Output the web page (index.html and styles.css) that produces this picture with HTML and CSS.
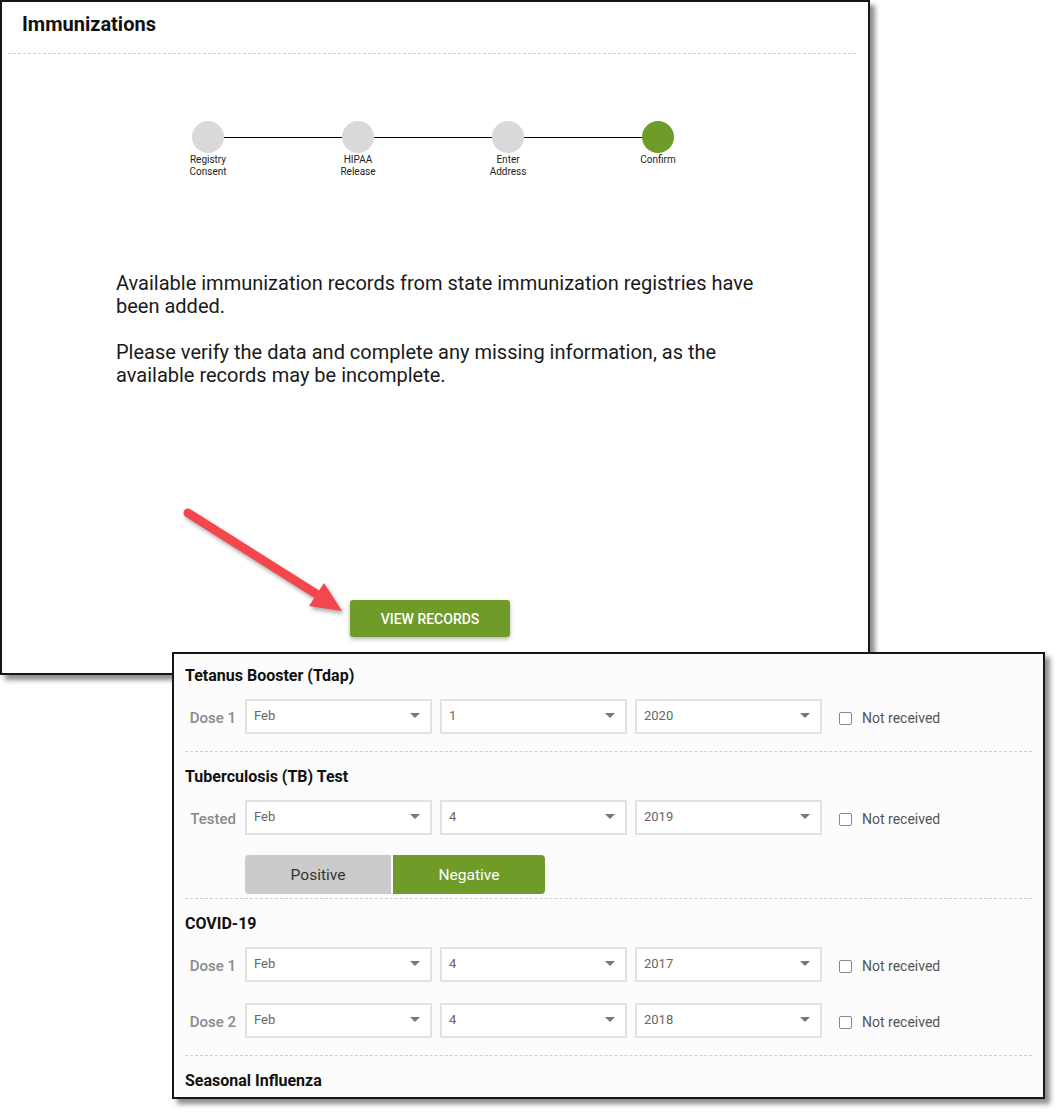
FILE: index.html
```html
<!DOCTYPE html>
<html lang="en">
<head>
  <meta charset="UTF-8">
  <title>Immunizations</title>
  <link rel="stylesheet" href="styles.css">
</head>
<body>

  <!-- first window: registry import wizard -->
  <div class="window wizard">
    <div class="wizard-header">
      <h2>Immunizations</h2>
    </div>

    <div class="steps">
      <div class="step">
        <span class="dot"></span>
        <span class="step-label">Registry<br>Consent</span>
      </div>
      <span class="connector"></span>
      <div class="step">
        <span class="dot"></span>
        <span class="step-label">HIPAA<br>Release</span>
      </div>
      <span class="connector"></span>
      <div class="step">
        <span class="dot"></span>
        <span class="step-label">Enter<br>Address</span>
      </div>
      <span class="connector"></span>
      <div class="step">
        <span class="dot active"></span>
        <span class="step-label">Confirm</span>
      </div>
    </div>

    <div class="message">
      <p>Available immunization records from state immunization registries have been added.</p>
      <p>Please verify the data and complete any missing information, as the available records may be incomplete.</p>
    </div>

    <button class="view-btn">VIEW RECORDS</button>
  </div>

  <!-- red callout arrow -->
  <svg class="arrow" width="180" height="120" viewBox="180 505 180 120">
    <line x1="188" y1="513" x2="318" y2="595" stroke="#f4474d" stroke-width="9" stroke-linecap="round"/>
    <polygon points="342,611 309,606 324,583" fill="#f4474d"/>
  </svg>

  <!-- second window: records -->
  <div class="window records">

    <div class="section">
      <h3>Tetanus Booster (Tdap)</h3>
      <div class="row">
        <span class="row-label">Dose 1</span>
        <div class="select"><span>Feb</span><i class="caret"></i></div>
        <div class="select"><span>1</span><i class="caret"></i></div>
        <div class="select"><span>2020</span><i class="caret"></i></div>
        <label class="check"><span class="box"></span>Not received</label>
      </div>
    </div>

    <div class="section tight">
      <h3>Tuberculosis (TB) Test</h3>
      <div class="row">
        <span class="row-label">Tested</span>
        <div class="select"><span>Feb</span><i class="caret"></i></div>
        <div class="select"><span>4</span><i class="caret"></i></div>
        <div class="select"><span>2019</span><i class="caret"></i></div>
        <label class="check"><span class="box"></span>Not received</label>
      </div>
      <div class="toggle">
        <button class="toggle-btn">Positive</button>
        <button class="toggle-btn on">Negative</button>
      </div>
    </div>

    <div class="section">
      <h3>COVID-19</h3>
      <div class="row">
        <span class="row-label">Dose 1</span>
        <div class="select"><span>Feb</span><i class="caret"></i></div>
        <div class="select"><span>4</span><i class="caret"></i></div>
        <div class="select"><span>2017</span><i class="caret"></i></div>
        <label class="check"><span class="box"></span>Not received</label>
      </div>
      <div class="row second">
        <span class="row-label">Dose 2</span>
        <div class="select"><span>Feb</span><i class="caret"></i></div>
        <div class="select"><span>4</span><i class="caret"></i></div>
        <div class="select"><span>2018</span><i class="caret"></i></div>
        <label class="check"><span class="box"></span>Not received</label>
      </div>
    </div>

    <div class="section last">
      <h3>Seasonal Influenza</h3>
    </div>

  </div>

</body>
</html>
```

FILE: styles.css
```css
* {
  box-sizing: border-box;
}

body {
  margin: 0;
  width: 1060px;
  height: 1114px;
  position: relative;
  background: #fff;
  font-family: Roboto, 'Liberation Sans', sans-serif;
  color: #1a1a1a;
}

.window {
  position: absolute;
  border: 2px solid #161616;
  box-shadow: 5px 5px 5px rgba(0,0,0,0.45);
}

/* ---------- wizard window ---------- */

.wizard {
  left: 0;
  top: 0;
  width: 870px;
  height: 675px;
  background: #fff;
}

.wizard-header {
  margin: 0 12px 0 6px;
  height: 52px;
  padding: 10px 0 0 14px;
  border-bottom: 1px dashed #d2d2d2;
}

.wizard-header h2 {
  margin: 0;
  font-size: 20px;
  line-height: 24px;
  font-weight: 700;
  color: #111;
}

.steps {
  display: flex;
  margin: 67px 0 0 190px;
}

.step {
  width: 32px;
  display: flex;
  flex-direction: column;
  align-items: center;
}

.dot {
  width: 32px;
  height: 32px;
  border-radius: 50%;
  background: #d9d9d9;
}

.dot.active {
  background: #6f9b29;
}

.step-label {
  font-size: 10px;
  line-height: 12px;
  color: #222;
  text-align: center;
  white-space: nowrap;
  margin-top: 1px;
}

.connector {
  flex: 0 0 118px;
  height: 1px;
  margin-top: 16px;
  background: #000;
}

.message {
  width: 660px;
  margin: 94px 0 0 114px;
  font-size: 20px;
  line-height: 23px;
  color: #1a1a1a;
}

.message p {
  margin: 0 0 23px;
}

.view-btn {
  display: block;
  margin: 213px 0 0 348px;
  width: 160px;
  height: 37px;
  border: none;
  border-radius: 3px;
  background: #6f9b29;
  color: #fff;
  font-family: Roboto, 'Liberation Sans', sans-serif;
  font-size: 14px;
  font-weight: 500;
  box-shadow: 0 2px 4px rgba(0,0,0,0.3);
  cursor: pointer;
}

.arrow {
  position: absolute;
  left: 180px;
  top: 505px;
  filter: drop-shadow(2px 3px 2px rgba(0,0,0,0.35));
}

/* ---------- records window ---------- */

.records {
  left: 172px;
  top: 652px;
  width: 873px;
  height: 447px;
  background: #fcfcfc;
  padding: 0 11px;
  overflow: hidden;
}

.section {
  padding: 15px 0 17px;
  border-bottom: 1px dashed #cfcfcf;
}

.section:first-child {
  padding-top: 12px;
}

.section.tight {
  padding-bottom: 4px;
}

.section.last {
  border-bottom: none;
}

.section h3 {
  margin: 0;
  font-size: 16px;
  line-height: 20px;
  font-weight: 700;
  color: #111;
}

.row {
  display: flex;
  align-items: center;
  margin-top: 13px;
}

.row.second {
  margin-top: 21px;
}

.row-label {
  width: 60px;
  padding-right: 9px;
  padding-top: 3px;
  text-align: right;
  font-size: 15px;
  font-weight: 500;
  color: #8a8a8a;
}

.select {
  width: 187px;
  height: 35px;
  margin-right: 8px;
  border: 2px solid #e2e2e2;
  background: #fff;
  display: flex;
  align-items: center;
  justify-content: space-between;
  padding: 0 10px 2px 7px;
  font-size: 13px;
  color: #666;
}

.caret {
  width: 0;
  height: 0;
  border-left: 5px solid transparent;
  border-right: 5px solid transparent;
  border-top: 5px solid #777;
}

.check {
  display: flex;
  align-items: center;
  margin-left: 9px;
  padding-top: 3px;
  font-size: 14px;
  color: #555;
}

.box {
  width: 13px;
  height: 13px;
  margin-right: 10px;
  border: 1px solid #888;
  border-radius: 2px;
  background: #fff;
}

.toggle {
  display: flex;
  gap: 2px;
  margin: 20px 0 0 60px;
}

.toggle-btn {
  height: 39px;
  width: 146px;
  border: none;
  background: #cbcbcb;
  color: #333;
  font-family: Roboto, 'Liberation Sans', sans-serif;
  font-size: 15.5px;
  border-radius: 4px 0 0 4px;
}

.toggle-btn.on {
  width: 152px;
  background: #6f9b29;
  color: #fff;
  border-radius: 0 4px 4px 0;
}
```
